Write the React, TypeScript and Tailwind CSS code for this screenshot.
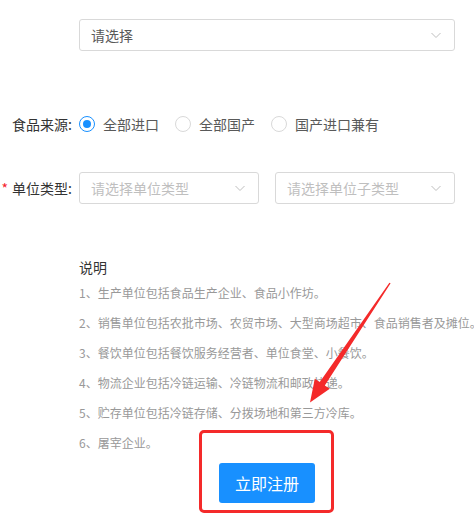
import React from 'react';

const font = { fontFamily: '"Noto Sans CJK SC", "Noto Sans", sans-serif' };

const Chevron = () => (
  <svg width="12" height="12" viewBox="0 0 12 12" className="shrink-0">
    <path d="M1.5 4 L6 8.5 L10.5 4" fill="none" stroke="#bfbfbf" strokeWidth="1" />
  </svg>
);

interface SelectProps {
  text: string;
  width: string;
  dark?: boolean;
}

const Select: React.FC<SelectProps> = ({ text, width, dark }) => (
  <div className={`${width} h-[32px] border border-[#d9d9d9] rounded-[3px] bg-white flex items-center justify-between pl-[11px] pr-[12px]`}>
    <span className={`text-[14px] ${dark ? 'text-[#595959]' : 'text-[#bfbfbf]'}`}>{text}</span>
    <Chevron />
  </div>
);

const Radio: React.FC<{ label: string; checked?: boolean }> = ({ label, checked }) => (
  <div className="flex items-center mr-[16px]">
    <span className={`w-[16px] h-[16px] rounded-full border flex items-center justify-center ${checked ? 'border-[#1890ff]' : 'border-[#d9d9d9]'}`}>
      {checked && <span className="w-[8px] h-[8px] rounded-full bg-[#1890ff]" />}
    </span>
    <span className="ml-[8px] text-[14px] text-[#595959]">{label}</span>
  </div>
);

const notes = [
  '1、生产单位包括食品生产企业、食品小作坊。',
  '2、销售单位包括农批市场、农贸市场、大型商场超市、食品销售者及摊位。',
  '3、餐饮单位包括餐饮服务经营者、单位食堂、小餐饮。',
  '4、物流企业包括冷链运输、冷链物流和邮政快递。',
  '5、贮存单位包括冷链存储、分拨场地和第三方冷库。',
  '6、屠宰企业。',
];

export default function App() {
  return (
    <div className="relative w-[474px] h-[522px] bg-white overflow-hidden" style={font}>
      <div className="pt-[19px] pl-[79px]">
        <Select text="请选择" width="w-[376px]" dark />
      </div>

      <div className="flex items-center h-[32px] mt-[57px]">
        <label className="w-[72px] text-right text-[14px] text-[#333] whitespace-nowrap">食品来源:</label>
        <div className="flex items-center ml-[7px]">
          <Radio label="全部进口" checked />
          <Radio label="全部国产" />
          <Radio label="国产进口兼有" />
        </div>
      </div>

      <div className="flex items-center h-[32px] mt-[32px]">
        <label className="w-[72px] text-right text-[14px] text-[#333] whitespace-nowrap">
          <span className="text-[#f5222d] mr-[4px]">*</span>单位类型:
        </label>
        <div className="flex items-center gap-[16px] ml-[7px]">
          <Select text="请选择单位类型" width="w-[180px]" />
          <Select text="请选择单位子类型" width="w-[180px]" />
        </div>
      </div>

      <div className="pl-[79px] mt-[53px]">
        <h3 className="text-[14px] leading-[20px] text-[#333]">说明</h3>
        <ul className="mt-[1px]">
          {notes.map((n, i) => (
            <li key={i} className="text-[12px] leading-[30px] text-[#999] whitespace-nowrap">{n}</li>
          ))}
        </ul>
        <div className="w-[376px] flex justify-center mt-[5px]">
          <button className="w-[96px] h-[40px] bg-[#1890ff] text-white text-[16px] rounded-[3px]">立即注册</button>
        </div>
      </div>

      {/* annotation overlay */}
      <div className="absolute left-[199px] top-[430px] w-[135px] h-[83px] border-[3px] border-[#f42a2a] rounded-[5px]" />
      <svg className="absolute left-0 top-0" width="474" height="522">
        <polygon
          points="390.6,283.3 389.4,282.7 319.8,382 314.8,378.7 310,402.5 329.8,388.7 324.8,385.4"
          fill="#f42a2a"
        />
      </svg>
    </div>
  );
}
